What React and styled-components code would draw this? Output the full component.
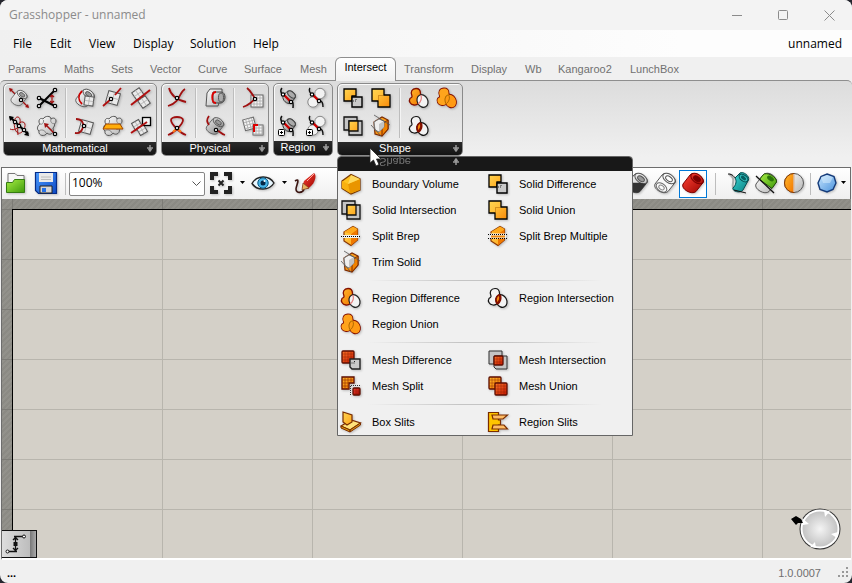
import React from "react";
import styled, { createGlobalStyle } from "styled-components";

const ui = '"Open Sans", "Noto Sans", sans-serif';
const sans = '"Liberation Sans", Arial, sans-serif';

const GlobalStyle = createGlobalStyle`
  * { box-sizing: border-box; }
  body { margin: 0; background: #25262e; }
  button, select { font: inherit; color: inherit; }
  svg { display: block; flex: none; overflow: visible; }
`;

/* ---------- layout ---------- */

const Window = styled.main`
  position: relative;
  display: flex;
  flex-direction: column;
  min-height: 100vh;
  overflow: hidden;
  border-radius: 8px;
  background: #f0f0f0;
  font-family: ${sans};
  font-size: 11px;
  line-height: 16px;
  color: #000;
`;

const TitleBar = styled.header`
  display: flex;
  align-items: center;
  justify-content: space-between;
  height: 30px;
  padding-left: 9px;
  background: #f3f3f3;
  color: #8b8b8b;
  font-family: ${ui};
`;

const WindowTitle = styled.h1`
  margin: 0;
  font-size: 12px;
  font-weight: 400;
`;

const WindowControls = styled.div`
  display: flex;
`;

const CaptionButton = styled.button`
  display: grid;
  place-items: center;
  width: 46px;
  height: 28px;
  padding: 0;
  border: 0;
  background: none;
`;

const MenuBar = styled.nav`
  display: flex;
  align-items: center;
  height: 27px;
  padding: 0 10px 0 13px;
  background: linear-gradient(90deg, #f0f0f0, #fdfdfd 80%);
  font-family: ${ui};
  font-size: 12px;
`;

const MenuButton = styled.button`
  width: ${(p) => p.$width}px;
  padding: 0;
  border: 0;
  background: none;
  text-align: left;
`;

const DocumentName = styled.span`
  margin-left: auto;
`;

const TabList = styled.div`
  display: flex;
  align-items: flex-end;
  height: 23px;
`;

const Tab = styled.button`
  position: relative;
  z-index: ${(p) => (p.$active ? 1 : 0)};
  width: ${(p) => p.$width}px;
  height: ${(p) => (p.$active ? 24 : 20)}px;
  margin-bottom: ${(p) => (p.$active ? -1 : 0)}px;
  padding: ${(p) => (p.$active ? "0 0 5px" : "0 0 2px 8px")};
  border: ${(p) => (p.$active ? "1px solid #8e8e8e" : "0")};
  border-bottom: 0;
  border-radius: 6px 6px 0 0;
  background: ${(p) => (p.$active ? "linear-gradient(#fff, #f0f0f0)" : "none")};
  color: ${(p) => (p.$active ? "#000" : "#707070")};
  text-align: ${(p) => (p.$active ? "center" : "left")};
  white-space: nowrap;
`;

const Ribbon = styled.section`
  display: flex;
  gap: 4px;
  height: 87px;
  padding: 2px 3px 0;
  border-top: 1px solid #8e8e8e;
  border-radius: 5px 5px 0 0;
  background: linear-gradient(#dcdcdc, #f0f0f0 76px);
`;

const Panel = styled.section`
  display: flex;
  flex-direction: column;
  height: 73px;
  border: 1px solid #8a8a8a;
  border-radius: 5px;
  overflow: hidden;
  background: linear-gradient(#d9d9d9, #f0f0f0);
  box-shadow: inset 1px 1px 0 #fafafa;
`;

const PanelTools = styled.div`
  display: flex;
  padding: 0 1px;
`;

const PanelRule = styled.span`
  width: 2px;
  height: 50px;
  margin: 4px;
  background: linear-gradient(90deg, #bdbdbd 1px, #f4f4f4 1px);
`;

const ToolGrid = styled.div`
  display: grid;
  grid-template-columns: repeat(${(p) => p.$columns}, 28px);
  grid-auto-rows: 28px;
`;

const ToolButton = styled.button`
  display: grid;
  place-items: center;
  padding: 0;
  border: 0;
  background: none;
`;

const PanelFooter = styled.button`
  display: flex;
  align-items: center;
  height: 14px;
  margin-top: auto;
  padding: 0 2px 2px 0;
  border: 0;
  background: linear-gradient(#2b2b2b, #121212);
  color: #fff;
  line-height: 12px;
`;

const FooterLabel = styled.span`
  flex: 1;
  text-align: center;
`;

const Toolbar = styled.div`
  display: flex;
  align-items: center;
  height: 32px;
  margin: 0 1px;
  padding: 0 4px 0 0;
  border: 1px solid #6d6d6d;
  border-bottom: 0;
  background: linear-gradient(#fff, #efefef);
`;

const BarButton = styled.button`
  display: grid;
  place-items: center;
  width: ${(p) => p.$width || 28}px;
  height: 28px;
  padding: 0 0 2px;
  border: ${(p) => (p.$selected ? "1px solid #0078d7" : "0")};
  background: ${(p) => (p.$selected ? "#fff" : "none")};
`;

const BarRule = styled.span`
  width: 1px;
  height: 22px;
  margin: 0 ${(p) => p.$gap}px;
  background: #bdbdbd;
`;

const BarEnd = styled.div`
  display: flex;
  align-items: center;
  margin-left: auto;
`;

const ZoomField = styled.label`
  position: relative;
  display: flex;
  align-items: center;
  width: 136px;
  margin-right: 2px;

  svg {
    position: absolute;
    right: 4px;
    pointer-events: none;
  }
`;

const ZoomSelect = styled.select`
  width: 100%;
  height: 24px;
  padding: 0 2px 2px;
  border: 1px solid #868686;
  border-radius: 2px;
  appearance: none;
  background: #fff;
  font-family: ${ui};
  font-size: 12px;
`;

const Workspace = styled.section`
  position: relative;
  display: flex;
  flex: 1;
  flex-direction: column;
  min-height: 240px;
  margin: 0 1px;
  padding: 10px 0 0 10px;
  border-left: 1px solid #6d6d6d;
  border-bottom: 2px solid #fff;
  background:
    linear-gradient(90deg, #7c7b76 1px, transparent 1px) 10px 0 / 150px 100%,
    linear-gradient(#7c7b76 1px, transparent 1px) 0 10px / 100% 50px,
    repeating-linear-gradient(135deg, #8b8a84 0 2px, #92918b 2px 4px);
`;

const Canvas = styled.div`
  flex: 1;
  border-top: 1px solid #000;
  border-left: 1px solid #000;
  background-color: #d4d0c8;
  background-image:
    linear-gradient(90deg, #b8b5ad 1px, transparent 1px),
    linear-gradient(#b8b5ad 1px, transparent 1px);
  background-size: 150px 50px;
  background-position: 149px 49px;
`;

const CanvasWidget = styled.button`
  position: absolute;
  bottom: 0;
  left: 0;
  display: grid;
  place-items: center;
  width: 35px;
  height: 28px;
  padding: 0 6px 0 0;
  border: 1px solid #111;
  border-left: 0;
  background: linear-gradient(90deg, #ddd, #bdbdbd 28px, #777 28px, #aaa);
`;

const Compass = styled.div`
  position: absolute;
  right: 9px;
  bottom: 7px;
`;

const StatusBar = styled.footer`
  display: flex;
  align-items: center;
  height: 23px;
  padding: 2px 3px 0 7px;
  color: #6e6e6e;
`;

const StatusMessage = styled.span`
  flex: 1;
  color: #000;
  font-weight: 700;
`;

const Version = styled.span`
  margin-right: 17px;
`;

/* ---------- drop-down ---------- */

const Dropdown = styled.section`
  position: absolute;
  top: 156px;
  left: 337px;
  width: 296px;
  border: 1px solid #666;
  border-radius: 4px 4px 0 0;
  background: #f0f0f0;
`;

const DropdownHeader = styled.div`
  display: flex;
  align-items: center;
  height: 14px;
  border-radius: 3px 3px 0 0;
  background: #181818;
  color: #777;
  line-height: 12px;
`;

const Reflection = styled.div`
  display: flex;
  align-items: center;
  width: 124px;
  padding: 4px 2px 0 0;
  transform: scaleY(-1);
`;

const CommandGroup = styled.div`
  display: grid;
  grid-template-columns: 147px 1fr;
  grid-auto-rows: 26px;

  & + & {
    grid-template-rows: 0;
    margin-top: 10px;
  }

  & + &::before {
    content: "";
    grid-column: 1 / -1;
    height: 1px;
    margin: -5px 30px 0;
    background: linear-gradient(90deg, transparent, #c4c4c4 40%, #c4c4c4 60%, transparent);
  }
`;

const Command = styled.button`
  display: flex;
  align-items: center;
  gap: 11px;
  padding: 0 0 0 3px;
  border: 0;
  background: none;
  text-align: left;
  white-space: nowrap;
`;

const Pointer = styled.div`
  position: absolute;
  top: 147px;
  left: 369px;
  pointer-events: none;
`;

/* ---------- drawings ---------- */

const BLOB = "M3 8C1 4 3 .500 7 .500C11 .500 11.500 3 11.500 5.500C12 8.500 13 9 12 12C11 15 8 17.500 5 17C1 16.500-.500 13 1 10.500C2 9.500 3.500 9.500 3 8Z";

const disc = { cx: 13.5, cy: 13, rx: 5.2, ry: 6.6, transform: "rotate(-28 13.5 13)" };

const Gradients = () => (
  <svg width="0" height="0" aria-hidden="true">
    <defs>
      {[
        ["gold", "#ffd451", "#ffa51a"],
        ["orange", "#ffb92c", "#f27500"],
        ["silver", "#ffffff", "#b4b4b4"],
        ["steel", "#ececec", "#7c7c7c"],
        ["scarlet", "#ff7a2b", "#c81400"],
        ["ruby", "#ff4436", "#9c0400"],
        ["teal", "#3fd9d4", "#067f83"],
        ["leaf", "#a8ee45", "#3f9a0c"],
        ["sky", "#c9e7ff", "#4a92dc"],
        ["azure", "#4c9cff", "#0b48c4"],
      ].map(([id, a, b]) => (
        <linearGradient key={id} id={id} x1="0" y1="0" x2="1" y2="1">
          <stop offset="0" stopColor={a} />
          <stop offset="1" stopColor={b} />
        </linearGradient>
      ))}
      <radialGradient id="dial">
        <stop offset="0" stopColor="#f4f4f4" />
        <stop offset="1" stopColor="#c4c4c4" />
      </radialGradient>
      <clipPath id="inBlob"><path d={BLOB} /></clipPath>
      <clipPath id="inDisc"><ellipse {...disc} /></clipPath>
    </defs>
  </svg>
);

const Icon = styled.svg.attrs({ viewBox: "0 0 20 20", width: 20, height: 20, "aria-hidden": true })`
  fill: none;
  filter: drop-shadow(1px 1px 1px rgba(0, 0, 0, 0.22));
`;

const Dot = ({ x, y }) => <circle cx={x} cy={y} r="1.7" fill="#fff" stroke="#000" strokeWidth="1.2" />;

const Tube = ({ fill = "url(#silver)", edge = "#555", hole = "#999", scale = 1 }) => (
  <g stroke={edge} strokeWidth="1" transform={`translate(10 10) scale(${scale}) translate(-10 -10)`}>
    <path d="M0 11 7 2C10-2 21.500 4 20.500 9L13 18.500C9 22.500-2.500 16 0 11Z" fill={fill} />
    <ellipse cx="14" cy="5.500" rx="7" ry="4.200" transform="rotate(36 14 5.500)" fill={fill} />
    <ellipse cx="14" cy="5.800" rx="3.800" ry="2.200" transform="rotate(36 14 5.800)" fill={hole} />
  </g>
);

const Sheet = ({ x, y, s = 9, angle = 18 }) => (
  <g transform={`translate(${x} ${y}) rotate(${angle})`} stroke="#555">
    <rect x={-s / 2} y={-s / 2} width={s} height={s} fill="#eaeaea" />
    <path d={`M0 ${-s / 2}v${s}M${-s / 2} 0h${s}`} stroke="#aaa" strokeWidth=".7" />
  </g>
);

const Mesh = ({ x, y, s = 12 }) => (
  <g>
    <rect x={x} y={y} width={s} height={s} fill="#f4f4f4" stroke="#666" />
    <path
      d={[3, 6, 9].map((n) => `M${x + n} ${y}v${s}M${x} ${y + n}h${s}`).join("")}
      stroke="#aaa"
      strokeWidth=".8"
    />
  </g>
);

const Cloud = () => (
  <g stroke="#555">
    <path
      d="M3 8C.500 5 3 1 6 3C8-.500 14-.500 14 3C18 0 21 5 17.500 8C18 9 17 11 16 12C18 17 13 20 10 17C8 21 1 20 2 15C-1 13 1 9 3 8Z"
      fill="url(#silver)"
    />
    <path d="M3 8c2 1 4-1 3.500-4M14 3c-1 3 1 5 3 4.500M2 15c2-2 6-1 7 2M13 13c2 1 3 0 3-1" stroke="#888" />
  </g>
);

const PlusBox = () => (
  <g>
    <rect x="-.5" y="13.500" width="6" height="6" rx="1" fill="#fff" stroke="#000" />
    <path d="M2.500 15v3M1 16.500h3" stroke="#000" />
  </g>
);

const RegionTube = () => (
  <g>
    <path d="M4 8 8 3.500C12 1 18 6 16 10L12 15C8 17 3 12 4 8Z" fill="url(#steel)" stroke="#333" />
    <ellipse cx="12.500" cy="6.500" rx="4.500" ry="2.600" transform="rotate(42 12.500 6.500)" fill="#aaa" stroke="#444" />
    <path d="m5 7 7 7" stroke="#c00" strokeWidth="2.400" />
    <path d="M3 0C0 3 3 5 3 7M13 14c2 1 1 3 1 6" stroke="#111" strokeWidth="1.500" />
    <Dot x={4} y={6.500} />
    <Dot x={12} y={14} />
  </g>
);

const RegionDiscs = () => (
  <g>
    <circle cx="13" cy="5.500" r="5.200" fill="#f2f2f2" stroke="#888" />
    <circle cx="6" cy="14" r="5.200" fill="#f2f2f2" stroke="#888" />
    <path d="m6 7 6 6" stroke="#c00" strokeWidth="2.400" />
    <path d="M3 0C1 3 3 5 5 7M13 13c3 0 3 3 3 6" stroke="#111" strokeWidth="1.400" />
    <Dot x={5} y={6.500} />
    <Dot x={12} y={13} />
  </g>
);

const TrimDrawing = () => (
  <g>
    <path d="M3 6 11 1l6 3v9l-6 7-7-2Z" fill="url(#orange)" stroke="#7c2a00" strokeWidth="1.200" />
    <path d="m11 8 6-4v9l-6 7Z" fill="#f08200" stroke="#7c2a00" />
    <path d="m3 6 5-3 5 2v6l-5 5-4-2Z" fill="#efefef" stroke="#777" />
    <path d="m8 8 5-3v6l-5 5Z" fill="#c3c3c3" />
    <path d="m3 -1 16 10M0 9l10 11" stroke="#555" strokeWidth=".8" />
  </g>
);

const SplitDrawing = ({ double }) => (
  <g>
    <path d="M3 6 12 .500 16.500 3v11L10 19.500 3 15Z" fill="url(#gold)" stroke="#8a3500" strokeWidth="1.200" />
    <path d="m10 8 6.500-5v11L10 19.500Z" fill="#ef7800" />
    <path d="m3 6 9-5.500L16.500 3 10 8Z" fill="#ffa91c" />
    <path d={double ? "M2 7.500h16v5H2Z" : "M2 9h16v3H2Z"} fill="#f0f0f0" />
    <path d={double ? "M0 8.500h20M0 12.500h20" : "M0 10.500h20"} stroke="#000" strokeDasharray="1 1" />
    {double && <path d="M3 10.500h14" stroke="#f08a10" strokeWidth="2" />}
  </g>
);

const MeshSquare = ({ x, y, s, fill }) => (
  <g>
    <rect x={x} y={y} width={s} height={s} rx="1" fill={fill} stroke="#5c0d00" strokeWidth="1.300" />
    <path
      d={[3, 6, 9].filter((n) => n < s).map((n) => `M${x + n} ${y}v${s}M${x} ${y + n}h${s}`).join("")}
      stroke="#8a2000"
      strokeOpacity=".6"
      strokeWidth=".7"
    />
  </g>
);

const drawings = {
  tubeLine: (
    <>
      <path d="M1 1 19 19" stroke="#a01010" strokeWidth="1.200" />
      <Tube scale={0.78} />
      <path d="m0 0 4 1-3 3ZM20 20l-4-1 3-3Z" fill="#a01010" />
      <path d="m12 12 6 6" stroke="#a01010" />
      <Dot x={12} y={12} />
    </>
  ),
  lineLine: (
    <>
      <path d="M2 18 18 2M2 10l16 8" stroke="#000" strokeWidth="2" />
      <path d="M15 7v8M13 9l2-2 2 2M13 13l2 2 2-2" stroke="#a01010" strokeWidth="1.200" />
      <Dot x={2} y={18} /><Dot x={18} y={2} /><Dot x={2} y={10} /><Dot x={18} y={18} />
    </>
  ),
  tubeSheet: (
    <>
      <Tube scale={0.9} />
      <path d="M7 3C3 7 3 12 7 16" stroke="#c00" strokeWidth="1.800" />
      <Sheet x={14} y={13} s={9} angle={8} />
    </>
  ),
  sheetLine: (
    <>
      <Sheet x={10} y={10} s={12} angle={16} />
      <path d="M0 18 8 11M12 7l6-7" stroke="#b01010" strokeWidth="1.800" />
      <Dot x={8} y={11} />
    </>
  ),
  sheetSheet: (
    <>
      <Sheet x={7} y={6} s={9} angle={-35} />
      <Sheet x={13} y={14} s={9} angle={-35} />
      <path d="M0 17 19 2" stroke="#b01010" strokeWidth="2" />
    </>
  ),
  curveLine: (
    <>
      <path d="M1 13C10 17 14 2 9 1S4 15 9 17s10-10 5-11S8 12 9 19" stroke="#a01010" />
      <path d="M1 1 19 18" stroke="#000" strokeWidth="2" />
      <path d="m0 0 5 1-4 4ZM20 20l-5-1 4-4Z" fill="#000" />
      <Dot x={6} y={6} /><Dot x={10} y={10} /><Dot x={15} y={14} />
    </>
  ),
  cloudLine: (
    <>
      <Cloud />
      <path d="m18 18-9-9" stroke="#a01010" strokeWidth="1.500" />
      <path d="m7 7 5 1-4 4Z" fill="#a01010" />
      <Dot x={18} y={18} />
    </>
  ),
  curveSheet: (
    <>
      <Sheet x={11} y={11} s={12} angle={16} />
      <path d="M1 3c6 0 8 4 7 8S5 18 0 17" stroke="#a01010" strokeWidth="1.800" />
      <Dot x={9} y={10} />
    </>
  ),
  cloudSheet: (
    <>
      <Cloud />
      <path d="M3 8h14l3 5H0Z" fill="#ffad0a" stroke="#a34700" />
    </>
  ),
  sheetBoxes: (
    <>
      <Sheet x={6} y={9} s={8} angle={-30} />
      <Sheet x={11} y={14} s={8} angle={-30} />
      <rect x="11.500" y="1.500" width="8" height="8" fill="#f4f4f4" stroke="#000" strokeWidth="1.300" />
      <path d="M0 17 16 6" stroke="#b01010" strokeWidth="2" />
    </>
  ),
  curveCurve: (
    <>
      <path d="M2 0C4 8 10 12 19 14M18 1C12 4 14 14 1 18" stroke="#a01010" strokeWidth="1.800" />
      <Dot x={10} y={10} />
    </>
  ),
  selfCurve: (
    <>
      <path d="M1 19C7 17 16 8 16 4C16 0 4 0 4 4C4 8 13 17 19 19" stroke="#a01010" strokeWidth="1.800" />
      <path d="m6 16 4-4 4 4" stroke="#ff7a1a" strokeWidth="2" />
      <Dot x={10} y={12} />
    </>
  ),
  solidSolid: (
    <>
      <path d="M2 5 5 1h12v4l-4 13H1Z" fill="url(#silver)" stroke="#555" />
      <path d="M8 4h8c3 0 4 3 4 5.500s-2 5.500-4 5.500H8Z" fill="url(#steel)" stroke="#444" />
      <ellipse cx="16" cy="9.500" rx="2.500" ry="4.500" fill="#aaa" stroke="#555" />
      <path d="M11 4C6 4 6 15 11 15" stroke="#d00" strokeWidth="1.800" />
    </>
  ),
  solidCurve: (
    <>
      <Tube fill="url(#steel)" scale={0.85} />
      <path d="M4 0C1 4 2 6 4 9M11 14c4 1 5 4 9 5" stroke="#a01010" strokeWidth="1.800" />
      <Dot x={11} y={14} />
    </>
  ),
  meshCurve: (
    <>
      <Mesh x={8} y={7} />
      <path d="M4 0c4 3 5 6 7 9S4 18 0 19" stroke="#a01010" strokeWidth="1.800" />
      <Dot x={12} y={11} />
    </>
  ),
  meshMesh: (
    <>
      <g transform="rotate(-15 8 8)"><Mesh x={1} y={2} s={11} /></g>
      <Mesh x={10} y={9} s={10} />
      <path d="M11 8v8M11 9h4" stroke="#d00" strokeWidth="2" />
    </>
  ),
  regionTube: <RegionTube />,
  regionDiscs: <RegionDiscs />,
  regionTubePlus: <><RegionTube /><PlusBox /></>,
  regionDiscsPlus: <><RegionDiscs /><PlusBox /></>,
  boundary: (
    <>
      <path d="M1 7 10 .500 19 5v11l-9 4-9-5.500Z" fill="#ffc21f" stroke="#7c3a00" strokeWidth="1.300" />
      <path d="m1 7 6 3 2 9-8-5Z" fill="#f9b010" />
      <path d="m7 10 12-5v11l-10 3.500Z" fill="#e99500" />
      <path d="M10 1 7 10 19 5Z" fill="#ffd95e" />
    </>
  ),
  solidDifference: (
    <>
      <path d="M1 1h12v7H9v5H1Z" fill="url(#gold)" stroke="#000" strokeWidth="1.300" />
      <path d="M9 9h10v10H9Z" fill="#c9c9c9" stroke="#000" strokeWidth="1.400" />
      <path d="M10 13h3v-3" stroke="#333" strokeDasharray="1 1" />
    </>
  ),
  solidUnion: (
    <>
      <path d="M1 1h12v6h6v12H7v-6H1Z" fill="url(#gold)" stroke="#000" strokeWidth="1.300" />
      <path d="M7.500 12.500v-5h5" stroke="#a85f00" strokeDasharray="1 1" />
      <path d="M8 8h10v10H8Z" fill="url(#orange)" fillOpacity=".5" />
    </>
  ),
  solidIntersection: (
    <>
      <path d="M1 1h13v13H1Z" fill="#c4c4c4" stroke="#111" strokeWidth="1.300" />
      <path d="M6 5h13v14H6Z" fill="#c4c4c4" stroke="#111" strokeWidth="1.300" />
      <path d="M6 5h9v10H6Z" fill="url(#gold)" stroke="#111" strokeWidth="1.300" />
    </>
  ),
  split: <SplitDrawing />,
  splitMultiple: <SplitDrawing double />,
  trim: <TrimDrawing />,
  regionDifference: (
    <>
      <path d={BLOB} fill="url(#orange)" stroke="#831000" strokeWidth="1.300" />
      <ellipse {...disc} fill="#f3f3f3" stroke="#222" strokeWidth="1.200" />
      <g clipPath="url(#inDisc)"><path d={BLOB} stroke="#e58080" strokeWidth="1.200" /></g>
    </>
  ),
  regionIntersection: (
    <>
      <path d={BLOB} fill="#f3f3f3" stroke="#111" strokeWidth="1.200" />
      <ellipse {...disc} fill="#f3f3f3" stroke="#111" strokeWidth="1.200" />
      <g clipPath="url(#inDisc)"><path d={BLOB} fill="url(#orange)" stroke="#831000" strokeWidth="2.400" /></g>
      <g clipPath="url(#inBlob)"><ellipse {...disc} stroke="#831000" strokeWidth="1.800" /></g>
    </>
  ),
  regionUnion: (
    <>
      <path d={BLOB} fill="url(#orange)" stroke="#831000" strokeWidth="1.800" />
      <ellipse {...disc} fill="url(#orange)" stroke="#831000" strokeWidth="1.800" />
      <path d={BLOB} fill="#ffa41c" />
      <ellipse {...disc} fill="#ff9a14" />
      <g clipPath="url(#inDisc)"><path d={BLOB} stroke="#b06a00" /></g>
      <g clipPath="url(#inBlob)"><ellipse {...disc} stroke="#b06a00" /></g>
    </>
  ),
  meshDifference: (
    <>
      <MeshSquare x={1} y={1} s={12} fill="url(#scarlet)" />
      <path d="M9 9h10v10h-8l-2-2Z" fill="#c9c9c9" stroke="#222" strokeWidth="1.400" />
      <path d="M10.500 13h3v-3" stroke="#222" strokeDasharray="1 1" />
    </>
  ),
  meshIntersection: (
    <>
      <path d="M1 1h13v13H1Z" fill="#c4c4c4" stroke="#333" />
      <path d="M6 6h13v13H8l-2-2Z" fill="#c4c4c4" stroke="#333" />
      <MeshSquare x={6} y={6} s={9} fill="url(#scarlet)" />
    </>
  ),
  meshSplit: (
    <>
      <path d="M1 1h12v6H8v6H1Z" fill="url(#orange)" stroke="#5c0d00" strokeWidth="1.300" />
      <path d="M4 1v12M7 1v12M10 1v6M1 4h12M1 7h7M1 10h7" stroke="#9b3300" strokeWidth=".7" />
      <path d="M9.500 19V9.500H19" stroke="#333" strokeDasharray="1 1" />
      <MeshSquare x={12} y={12} s={7} fill="url(#ruby)" />
    </>
  ),
  meshUnion: (
    <>
      <MeshSquare x={1} y={1} s={12} fill="url(#orange)" />
      <MeshSquare x={7} y={7} s={12} fill="url(#scarlet)" />
    </>
  ),
  boxSlits: (
    <>
      <path d="m0 14 10-6 9.500 3L9 18Z" fill="#ffe27a" stroke="#7a2d00" strokeWidth="1.200" />
      <path d="m0 14 9 4v2l-9-4ZM9 18l10.500-7v2L9 20Z" fill="#e09a10" stroke="#7a2d00" />
      <path d="m2 0 9 3v7l-5 3-4-3Z" fill="url(#gold)" stroke="#7a2d00" strokeWidth="1.200" />
    </>
  ),
  regionSlits: (
    <>
      <path d="M.5.500h10V8h2v5h-2v6.500H.5Z" fill="#ffc400" stroke="#7a2d00" strokeWidth="1.200" />
      <path d="M4 3h15.500L15 7H5ZM5 13h11l3.500 4H4Z" fill="#ffbd65" stroke="#7a2d00" strokeWidth="1.200" />
    </>
  ),
  open: (
    <>
      <path d="M2 9V.500h7l2 2h7V9" fill="#f7f7f7" stroke="#777" />
      <path d="M.5 19.500V9.500h6l2-3h10v13Z" fill="url(#leaf)" stroke="#347b12" />
    </>
  ),
  save: (
    <>
      <path d="M-.5-.500h21v21H2.500l-3-3Z" fill="url(#azure)" stroke="#062c86" strokeWidth="1.200" />
      <path d="M3 0h14v9H3Z" fill="#e9e9e9" />
      <path d="M5 4h10M5 6.500h10" stroke="#bbb" />
      <path d="M4 13h12v7H4Z" fill="#d5d5d5" stroke="#222" />
      <path d="M6 15h4v4H6Z" fill="#2370e8" />
    </>
  ),
  focus: (
    <>
      <path d="M1 7V1h6M13 1h6v6M19 13v6h-6M7 19H1v-6" stroke="#222" strokeWidth="4" />
      <path d="m7.500 7.500 5 5m0-5-5 5" stroke="#222" strokeWidth="2" />
    </>
  ),
  eye: (
    <>
      <path d="M-1 10.500C4 2 16 2 21 10C16 18 4 18-1 10.500Z" fill="#e9f7ff" stroke="#222" strokeWidth="1.400" />
      <circle cx="10" cy="10" r="5.200" fill="#49b6e8" stroke="#08557f" />
      <circle cx="10" cy="10" r="2.500" fill="#052747" />
      <circle cx="11.500" cy="8" r="1" fill="#fff" />
    </>
  ),
  sketch: (
    <>
      <path d="M0 8c6-4 1 5 1 8 0 5 7 4 8 0" stroke="#3a1410" strokeWidth="1.600" />
      <path d="m7 15 2-7L19 0c3 2 1 9-2 12l-4 4Z" fill="url(#ruby)" />
      <path d="m8 10 6 5-7 2Z" fill="#e7b260" stroke="#7a3b18" strokeWidth=".7" />
      <path d="m12 8 7-7" stroke="#ffaaa2" />
    </>
  ),
  halfShade: (
    <>
      <Tube />
      <path d="M0 11C6 9 14 10 19 11L13 18.500C9 22.500-2.500 16 0 11Z" fill="#333" />
    </>
  ),
  wire: (
    <>
      <Tube fill="#fafafa" hole="#fff" />
      <ellipse cx="6.500" cy="14.500" rx="6" ry="3.800" transform="rotate(36 6.500 14.500)" stroke="#666" />
      <ellipse cx="6.500" cy="14.500" rx="3" ry="2" transform="rotate(36 6.500 14.500)" stroke="#888" />
    </>
  ),
  shaded: <Tube fill="url(#ruby)" edge="#7d0000" hole="#7b0000" />,
  tealTube: (
    <>
      <path d="M1 1c4 2 5 5 4 9s0 6 2 8" stroke="#555" strokeWidth="2" strokeOpacity=".4" />
      <path d="M7 5 12 0c3-2 10 3 8.500 7L15 17c-3 4-11 1-10-2 3-3 4-7 2-10Z" fill="url(#teal)" stroke="#044b4e" />
      <ellipse cx="15.500" cy="5" rx="5" ry="3" transform="rotate(38 15.500 5)" fill="#2fb9b8" stroke="#044b4e" />
      <ellipse cx="15.500" cy="5" rx="3" ry="1.700" transform="rotate(38 15.500 5)" fill="#065f62" />
      <path d="M0 1c5 0 6 3 7 4M6 17l12 3" stroke="#111" />
    </>
  ),
  greenTube: (
    <>
      <Tube />
      <path d="M3.500 6.500 7 2C10-2 21.500 4 20.500 9L16 15.500Z" fill="url(#leaf)" stroke="#234d0b" />
      <ellipse cx="14.500" cy="5.500" rx="3.800" ry="2.200" transform="rotate(36 14.500 5.500)" fill="#2a7708" />
      <path d="m0 3 18 17" stroke="#111" strokeWidth="1.300" />
    </>
  ),
  sphere: (
    <>
      <circle cx="10" cy="10" r="9.500" fill="url(#silver)" stroke="#555" />
      <path d="M10 .500a9.500 9.500 0 0 0 0 19Z" fill="url(#orange)" stroke="#8a3a00" />
      <path d="M10 1v18" stroke="#fff" />
    </>
  ),
  gem: (
    <>
      <path d="m10 1 7 2.500L19 10l-3 6.500L10 19l-7-2.500L1 10l3-6.500Z" fill="url(#sky)" stroke="#153b7a" strokeWidth="1.400" />
      <path d="m4 4 6-2 6 2-3 6H6Z" fill="#e2f3ff" fillOpacity=".45" />
    </>
  ),
};

const Glyph = ({ name }) => <Icon>{drawings[name]}</Icon>;

const ArrowDown = () => (
  <svg width="5" height="3" viewBox="0 0 5 3" aria-hidden="true"><path d="M0 0h5L2.500 3Z" /></svg>
);

const PinMark = () => (
  <svg width="8" height="8" viewBox="0 0 8 8" fill="none" aria-hidden="true">
    <path d="M4 1v6M1 4h6M2.500 5 4 7l1.500-2" stroke="#999" strokeWidth="1.500" />
  </svg>
);

/* ---------- data ---------- */

const menus = [["File", 37], ["Edit", 39], ["View", 44], ["Display", 57], ["Solution", 63], ["Help", 40]];

const tabs = [
  ["Params", 56], ["Maths", 47], ["Sets", 39], ["Vector", 48], ["Curve", 46], ["Surface", 56], ["Mesh", 43],
  ["Intersect", 61], ["Transform", 67], ["Display", 54], ["Wb", 33], ["Kangaroo2", 72], ["LunchBox", 66],
];

const panels = [
  { name: "Mathematical", groups: [
    { columns: 2, tools: ["tubeLine", "lineLine", "curveLine", "cloudLine"] },
    { columns: 3, tools: ["tubeSheet", "sheetLine", "sheetSheet", "curveSheet", "cloudSheet", "sheetBoxes"] },
  ] },
  { name: "Physical", groups: [
    { columns: 1, tools: ["curveCurve", "selfCurve"] },
    { columns: 1, tools: ["solidSolid", "solidCurve"] },
    { columns: 1, tools: ["meshCurve", "meshMesh"] },
  ] },
  { name: "Region", groups: [
    { columns: 2, tools: ["regionTube", "regionDiscs", "regionTubePlus", "regionDiscsPlus"] },
  ] },
  { name: "Shape", groups: [
    { columns: 2, tools: ["solidDifference", "solidUnion", "solidIntersection", "trim"] },
    { columns: 2, tools: ["regionDifference", "regionUnion", "regionIntersection"] },
  ] },
];

const commands = [
  [
    ["Boundary Volume", "boundary"], ["Solid Difference", "solidDifference"],
    ["Solid Intersection", "solidIntersection"], ["Solid Union", "solidUnion"],
    ["Split Brep", "split"], ["Split Brep Multiple", "splitMultiple"],
    ["Trim Solid", "trim"],
  ],
  [
    ["Region Difference", "regionDifference"], ["Region Intersection", "regionIntersection"],
    ["Region Union", "regionUnion"],
  ],
  [
    ["Mesh Difference", "meshDifference"], ["Mesh Intersection", "meshIntersection"],
    ["Mesh Split", "meshSplit"], ["Mesh Union", "meshUnion"],
  ],
  [["Box Slits", "boxSlits"], ["Region Slits", "regionSlits"]],
];

/* ---------- page ---------- */

export default function App() {
  return (
    <Window>
      <GlobalStyle />
      <TitleBar>
        <WindowTitle>Grasshopper - unnamed</WindowTitle>
        <WindowControls>
          <CaptionButton aria-label="Minimize">
            <svg width="11" height="11" stroke="#8b8b8b"><path d="M0 5.500h10" /></svg>
          </CaptionButton>
          <CaptionButton aria-label="Maximize">
            <svg width="11" height="11" stroke="#8b8b8b" fill="none"><rect x=".5" y=".5" width="9" height="9" rx="1" /></svg>
          </CaptionButton>
          <CaptionButton aria-label="Close">
            <svg width="11" height="11" stroke="#8b8b8b"><path d="m.5.5 10 10m0-10-10 10" /></svg>
          </CaptionButton>
        </WindowControls>
      </TitleBar>

      <MenuBar>
        {menus.map(([label, width]) => <MenuButton key={label} $width={width}>{label}</MenuButton>)}
        <DocumentName>unnamed</DocumentName>
      </MenuBar>

      <TabList role="tablist">
        {tabs.map(([label, width]) => (
          <Tab key={label} role="tab" aria-selected={label === "Intersect"} $active={label === "Intersect"} $width={width}>
            {label}
          </Tab>
        ))}
      </TabList>

      <Ribbon>
        {panels.map(({ name, groups }) => (
          <Panel key={name}>
            <PanelTools>
              {groups.map(({ columns, tools }, i) => (
                <React.Fragment key={i}>
                  {i > 0 && <PanelRule />}
                  <ToolGrid $columns={columns}>
                    {tools.map((tool) => <ToolButton key={tool} aria-label={tool}><Glyph name={tool} /></ToolButton>)}
                  </ToolGrid>
                </React.Fragment>
              ))}
            </PanelTools>
            <PanelFooter><FooterLabel>{name}</FooterLabel><PinMark /></PanelFooter>
          </Panel>
        ))}
      </Ribbon>

      <Toolbar>
        <BarButton aria-label="Open"><Glyph name="open" /></BarButton>
        <BarButton aria-label="Save" $width={32}><Glyph name="save" /></BarButton>
        <BarRule $gap={3} />
        <ZoomField>
          <ZoomSelect aria-label="Zoom" defaultValue="100%"><option>100%</option></ZoomSelect>
          <svg width="9" height="5" fill="none" stroke="#555"><path d="m.5.5 4 4 4-4" /></svg>
        </ZoomField>
        <BarButton aria-label="Zoom extents"><Glyph name="focus" /></BarButton>
        <BarButton aria-label="Zoom options" $width={14}><ArrowDown /></BarButton>
        <BarButton aria-label="Preview"><Glyph name="eye" /></BarButton>
        <BarButton aria-label="Preview options" $width={14}><ArrowDown /></BarButton>
        <BarButton aria-label="Sketch"><Glyph name="sketch" /></BarButton>
        <BarEnd>
          <BarButton aria-label="No preview"><Glyph name="halfShade" /></BarButton>
          <BarButton aria-label="Wireframe"><Glyph name="wire" /></BarButton>
          <BarButton aria-label="Shaded" $selected><Glyph name="shaded" /></BarButton>
          <BarRule $gap={8} />
          <BarButton aria-label="Selected preview"><Glyph name="tealTube" /></BarButton>
          <BarButton aria-label="Document preview"><Glyph name="greenTube" /></BarButton>
          <BarButton aria-label="Preview mesh"><Glyph name="sphere" /></BarButton>
          <BarRule $gap={2} />
          <BarButton aria-label="Mesh quality"><Glyph name="gem" /></BarButton>
          <BarButton aria-label="Quality options" $width={5}><ArrowDown /></BarButton>
        </BarEnd>
      </Toolbar>

      <Workspace>
        <Canvas />
        <CanvasWidget aria-label="Align">
          <svg width="20" height="20" stroke="#111" fill="none">
            <path d="M8 2.500h9M2 17.500h9M9.500 4v5M9.500 11v5M7 6l2.500-2.500L12 6M7 14l2.500 2.500L12 14" strokeWidth="1.300" />
            <rect x="8" y="8.500" width="3" height="3" fill="#111" />
            <circle cx="18" cy="2.500" r="1.500" fill="#fff" /><circle cx="1.500" cy="17.500" r="1.500" fill="#fff" />
          </svg>
        </CanvasWidget>
        <Compass>
          <svg width="52" height="44" fill="none" aria-hidden="true">
            <circle cx="30" cy="22" r="20.500" fill="#333" />
            <circle cx="30" cy="22" r="19.500" fill="#fff" />
            <circle cx="30" cy="22" r="17.500" fill="url(#dial)" />
            <path d="m12 11 7 6-6 1ZM34 3l6 1-5 6ZM48 25l-1 6-6-4ZM26 41l-6-1 5-5Z" fill="#fff" />
            <path d="m1 12 5-3 5 3 2 4-5 0-2 2Z" fill="#000" />
          </svg>
        </Compass>
      </Workspace>

      <StatusBar>
        <StatusMessage>...</StatusMessage>
        <Version>1.0.0007</Version>
        <svg width="11" height="11" fill="#999" aria-hidden="true">
          <path d="M8 0h2v2H8ZM4 4h2v2H4ZM8 4h2v2H8ZM0 8h2v2H0ZM4 8h2v2H4ZM8 8h2v2H8Z" />
        </svg>
      </StatusBar>

      <Dropdown aria-label="Shape commands">
        <DropdownHeader aria-hidden="true">
          <Reflection><FooterLabel>Shape</FooterLabel><PinMark /></Reflection>
        </DropdownHeader>
        {commands.map((group, i) => (
          <CommandGroup key={i}>
            {group.map(([label, icon]) => (
              <Command key={label}><Glyph name={icon} />{label}</Command>
            ))}
          </CommandGroup>
        ))}
      </Dropdown>

      <Pointer>
        <svg width="14" height="20" aria-hidden="true">
          <path d="M1 1v15l3.500-3 2.500 6 3-1.500-2.500-5.500H12Z" fill="#fff" stroke="#222" strokeWidth=".8" />
        </svg>
      </Pointer>
      <Gradients />
    </Window>
  );
}
